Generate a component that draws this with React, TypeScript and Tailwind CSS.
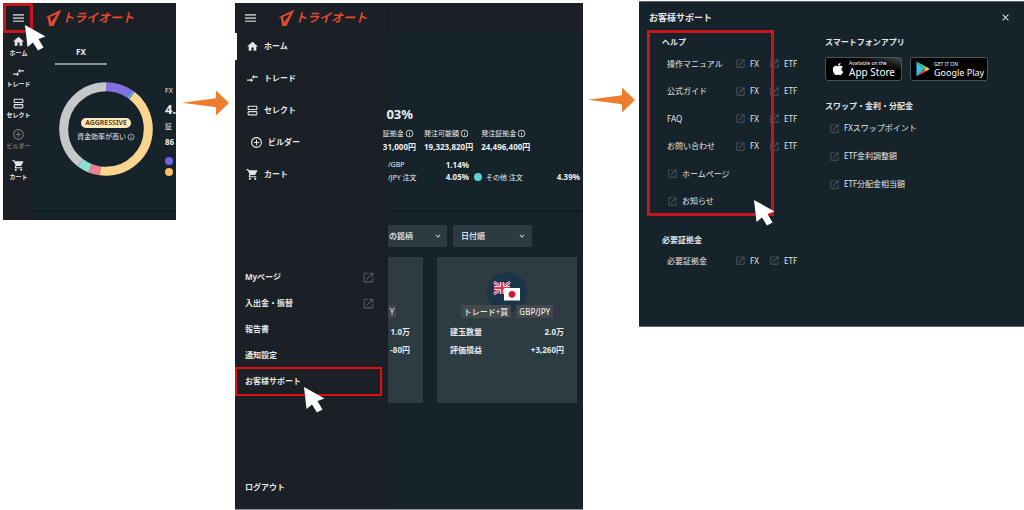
import React from "react";
import {
  MdAddCircleOutline,
  MdClose,
  MdCompareArrows,
  MdExpandMore,
  MdHome,
  MdInfoOutline,
  MdOpenInNew,
  MdOutlineViewAgenda,
  MdShoppingCart,
} from "react-icons/md";
import { FaApple } from "react-icons/fa";

const menu = [
  { label: "ホーム", Icon: MdHome },
  { label: "トレード", Icon: MdCompareArrows },
  { label: "セレクト", Icon: MdOutlineViewAgenda },
  { label: "ビルダー", Icon: MdAddCircleOutline },
  { label: "カート", Icon: MdShoppingCart },
];

function Bars() {
  return (
    <svg className="h-[10px] w-[11px]" viewBox="0 0 11 10" fill="currentColor" aria-hidden="true">
      <path d="M0 1h11v1.700H0z M0 4.200h11v1.700H0z M0 7.400h11v1.700H0z" />
    </svg>
  );
}

function Pointer({ className }: { className: string }) {
  return (
    <svg className={`absolute h-[26px] w-[21px] ${className}`} viewBox="0 0 21 26" fill="#fff" aria-hidden="true">
      <path d="M0 0 L2.5 22 L8 17.5 L13 25.5 L18.5 22.5 L13.5 14 L20.5 11.5 Z" />
    </svg>
  );
}

function Arrow({ className }: { className: string }) {
  return (
    <div className={`flex min-w-0 justify-center ${className}`}>
      <svg className="h-[26px] w-[47px]" viewBox="0 0 47 26" fill="#ed7d31" aria-hidden="true">
        <path d="M0 12.7 L34 8.3 V0.5 L47 13 L34 25.5 V17.2 Z" />
      </svg>
    </div>
  );
}

function Logo() {
  return (
    <a href="#" className="flex items-center text-[#e2492f]">
      <svg className="h-[18px] w-[17px]" viewBox="0 0 17 18" aria-hidden="true">
        <path
          d="M0.500 8.200 L16.500 0.500 L8.500 17 L4.200 17 L2.800 8.900 L5.200 8 L6.200 13.300 L12 5 L3.500 8.700 Z"
          fill="currentColor"
        />
      </svg>
      <span className="text-[12px] leading-none font-bold whitespace-nowrap italic">トライオート</span>
    </a>
  );
}

function Donut() {
  const parts = [
    { from: 0, to: 34, color: "#8470e0" },
    { from: 34, to: 38, color: "#5aa5f0" },
    { from: 38, to: 188, color: "#fbd48e" },
    { from: 188, to: 202, color: "#ec8094" },
    { from: 202, to: 217, color: "#8edfd2" },
    { from: 217, to: 360, color: "#c6c7c9" },
  ];
  return (
    <svg className="col-start-1 row-start-1 size-[94px]" viewBox="0 0 94 94" fill="none" aria-hidden="true">
      {parts.map((p) => (
        <circle
          key={p.from}
          cx="47"
          cy="47"
          r="42.3"
          stroke={p.color}
          strokeWidth="9"
          pathLength="360"
          strokeDasharray={`${p.to - p.from} ${360 - p.to + p.from}`}
          strokeDashoffset={-p.from}
          transform="rotate(-90 47 47)"
        />
      ))}
    </svg>
  );
}

function HomePanel() {
  return (
    <section className="relative mt-[3px] h-[217px] min-w-0 bg-[#16232b]">
      <div className="flex h-full flex-col overflow-hidden">
        <header className="flex h-[30px] shrink-0 items-center bg-[#1a2026]">
          <button aria-label="メニュー" className="flex w-[30px] justify-center text-[#a9adb1]">
            <Bars />
          </button>
          <div className="ml-[12px]">
            <Logo />
          </div>
        </header>
        <div className="flex min-h-0 grow">
          <nav className="w-[31px] shrink-0 bg-[#1a2026]">
            {menu.map(({ label, Icon }, i) => (
              <a
                key={label}
                href="#"
                className={`flex h-[31px] flex-col items-center gap-[2px] pt-[2px] ${i === 3 ? "text-[#6d7276]" : "text-[#e4e6e8]"}`}
              >
                <Icon className="size-[13px]" />
                <span className="text-[6px] leading-none font-bold whitespace-nowrap">{label}</span>
              </a>
            ))}
          </nav>
          <div className="flex min-w-0 grow flex-col overflow-hidden">
            <div className="ml-[21px] flex h-[32px] w-[52px] items-end justify-center border-b-2 border-[#8b969c] pb-[7px] text-[8px] leading-none font-bold">
              FX
            </div>
            <div className="mt-[17px] flex gap-[12px] pl-[25px]">
              <div className="grid shrink-0 place-items-center">
                <Donut />
                <div className="col-start-1 row-start-1 flex flex-col items-center gap-[5px]">
                  <span className="flex h-[10px] items-center rounded-full bg-[#fbe9b7] px-[4px] text-[7px] leading-none font-semibold text-[#4a3020]">
                    AGGRESSIVE
                  </span>
                  <span className="flex items-center gap-px text-[7px] leading-none whitespace-nowrap">
                    資金効率が高い
                    <MdInfoOutline className="size-[8px]" />
                  </span>
                </div>
              </div>
              <div className="flex shrink-0 flex-col whitespace-nowrap">
                <span className="flex h-[18px] items-center text-[7px]">FX</span>
                <span className="flex h-[18px] items-center text-[13px] leading-none font-bold">4.</span>
                <span className="flex h-[18px] items-center text-[7px]">証</span>
                <span className="flex h-[12px] items-center text-[8px] font-bold">86</span>
                <span className="mt-[9px] size-[8px] rounded-full bg-[#7460e8]" />
                <span className="mt-[3px] size-[8px] rounded-full bg-[#fbc05c]" />
              </div>
            </div>
            <div className="mt-[34px] h-[2px] shrink-0 bg-[#101a21]" />
          </div>
        </div>
      </div>
      <div className="absolute top-0 left-0 h-[30px] w-[30px] border-3 border-[#c8141c]" />
      <Pointer className="top-[22px] left-[22px]" />
    </section>
  );
}

function Stat({ label, value }: { label: string; value: string }) {
  return (
    <div className="flex flex-col whitespace-nowrap">
      <span className="flex h-[14px] items-center gap-px text-[7px]">
        {label}
        <MdInfoOutline className="size-[9px]" />
      </span>
      <span className="flex h-[14px] items-center text-[8px] font-bold">{value}</span>
    </div>
  );
}

function Drawer() {
  const links = [
    { label: "Myページ", external: true },
    { label: "入出金・振替", external: true },
    { label: "報告書", external: false },
    { label: "通知設定", external: false },
    { label: "お客様サポート", external: false },
  ];
  return (
    <aside className="relative flex w-[152px] shrink-0 flex-col bg-[#1a2026] text-[8px] leading-none font-bold text-[#e4e6e8]">
      <div className="flex h-[30px] items-center pl-[10px]">
        <button aria-label="メニューを閉じる" className="text-[#a9adb1]">
          <Bars />
        </button>
        <div className="ml-[22px]">
          <Logo />
        </div>
      </div>
      <nav className="-mt-[3px]">
        {menu.map(({ label, Icon }, i) => (
          <a key={label} href="#" className={`flex h-[32px] items-center gap-[5px] ${i === 3 ? "pl-[15px]" : "pl-[11px]"}`}>
            <Icon className="size-[13px]" />
            <span>{label}</span>
          </a>
        ))}
      </nav>
      <nav className="mt-[74px] pr-[12px] pl-[10px]">
        {links.map((l) => (
          <a key={l.label} href="#" className="flex h-[26px] items-center justify-between">
            <span>{l.label}</span>
            {l.external && <MdOpenInNew className="size-[13px] text-[#555b60]" />}
          </a>
        ))}
      </nav>
      <a href="#" className="mt-auto mb-[18px] pl-[10px]">
        ログアウト
      </a>
      <span className="absolute top-[30px] left-0 h-[27px] w-[2px] bg-white" />
      <span className="absolute top-[364px] left-0 h-[29px] w-[147px] border-2 border-[#e60d10]" />
      <Pointer className="top-[384px] left-[69px]" />
    </aside>
  );
}

function Flags() {
  return (
    <svg className="mx-auto size-[40px]" viewBox="0 0 40 40" aria-hidden="true">
      <circle cx="20" cy="20" r="20" fill="#1b3447" />
      <rect x="7" y="10" width="16" height="12" fill="#3a4a86" />
      <path d="M7 10 L23 22 M23 10 L7 22" stroke="#fff" strokeWidth="2.6" />
      <path d="M7 10 L23 22 M23 10 L7 22" stroke="#dc3550" strokeWidth="1.2" />
      <path d="M15 10 V22 M7 16 H23" stroke="#fff" strokeWidth="4" />
      <path d="M15 10 V22 M7 16 H23" stroke="#dc3550" strokeWidth="2.4" />
      <rect x="17" y="16" width="16" height="12.500" fill="#fff" />
      <circle cx="25" cy="22.300" r="3.400" fill="#d4152a" />
    </svg>
  );
}

function MenuPanel() {
  return (
    <section className="mt-[3px] flex h-[507px] min-w-0 overflow-hidden border-b border-[#8a9297] bg-[#16232b]">
      <Drawer />
      <div className="relative flex min-w-0 grow flex-col border-l border-[#141b21] leading-none">
        <div className="h-[30px] shrink-0 bg-[#1a2026]" />
        <div className="mt-[71px] flex h-[20px] w-[25px] items-center justify-end text-[13px] font-bold">03%</div>
        <div className="mt-[2px] flex gap-[8px]">
          <div className="flex w-[28px] shrink-0 justify-end">
            <Stat label="証拠金" value="31,000円" />
          </div>
          <Stat label="発注可能額" value="19,323,820円" />
          <Stat label="発注証拠金" value="24,496,400円" />
        </div>
        <div className="mt-[4px] grid grid-cols-[81px_1fr] gap-x-[5px] pr-[3px] text-[7px] whitespace-nowrap">
          <div className="flex h-[13px] items-center justify-between">
            <span>/GBP</span>
            <b className="text-[8px]">1.14%</b>
          </div>
          <div />
          <div className="flex h-[12px] items-center justify-between">
            <span>/JPY 注文</span>
            <b className="text-[8px]">4.05%</b>
          </div>
          <div className="flex h-[12px] items-center">
            <span className="mr-[4px] size-[8px] rounded-full bg-[#58d3cd]" />
            <span>その他 注文</span>
            <b className="ml-auto text-[8px]">4.39%</b>
          </div>
        </div>
        <div className="mt-[27px] h-[2px] bg-[#101a21]" />
        <div className="mt-[13px] flex gap-[6px] text-[8px] font-bold text-[#d5d9dc]">
          <div className="relative flex w-[59px] justify-end overflow-hidden">
            <select aria-label="銘柄" className="h-[22px] w-[74px] shrink-0 appearance-none bg-[#2c3a42] pl-[8px]">
              <option>ての銘柄</option>
            </select>
            <MdExpandMore className="pointer-events-none absolute top-[6px] right-[4px] size-[10px]" />
          </div>
          <div className="relative w-[79px]">
            <select aria-label="並び順" className="h-[22px] w-full appearance-none bg-[#2c3a42] pl-[8px]">
              <option>日付順</option>
            </select>
            <MdExpandMore className="pointer-events-none absolute top-[6px] right-[5px] size-[10px]" />
          </div>
        </div>
        <div className="mt-[10px] flex gap-[14px] pr-[6px] text-[8px] font-bold whitespace-nowrap text-[#e4e6e8]">
          <div className="h-[146px] w-[35px] shrink-0 bg-[#2d3b43] pt-[48px] pr-[13px] text-right">
            <div className="flex h-[13px] w-[8px] items-center justify-center bg-[#42484c] font-normal">Y</div>
            <div className="mt-[5px] flex h-[18px] items-center justify-end">1.0万</div>
            <div className="flex h-[18px] items-center justify-end">-80円</div>
          </div>
          <div className="h-[146px] grow bg-[#2d3b43] px-[13px] pt-[15px]">
            <Flags />
            <div className="-mt-[7px] flex justify-center gap-[5px] font-medium">
              <span className="flex h-[13px] items-center bg-[#42484c] px-[3px]">トレード+買</span>
              <span className="flex h-[13px] items-center bg-[#42484c] px-[3px]">GBP/JPY</span>
            </div>
            <div className="mt-[5px] flex h-[18px] items-center justify-between">
              <span>建玉数量</span>
              <span>2.0万</span>
            </div>
            <div className="flex h-[18px] items-center justify-between">
              <span>評価損益</span>
              <span>+3,260円</span>
            </div>
          </div>
        </div>
      </div>
    </section>
  );
}

function ExternalLink({ children }: { children: React.ReactNode }) {
  return (
    <a href="#" className="flex items-center gap-[4px] whitespace-nowrap">
      <MdOpenInNew className="size-[11px] text-[#4d575d]" />
      <span>{children}</span>
    </a>
  );
}

function ProductRow({ label }: { label: string }) {
  return (
    <div className="grid grid-cols-[68px_34px_1fr] items-center whitespace-nowrap">
      <span>{label}</span>
      <ExternalLink>FX</ExternalLink>
      <ExternalLink>ETF</ExternalLink>
    </div>
  );
}

function SupportPanel() {
  return (
    <section className="mt-px h-[326px] min-w-0 border-t border-b border-[#5c686f] bg-[#16232b] text-[8px] leading-none text-[#e4e6e8]">
      <div className="flex h-[30px] items-center justify-between pr-[13px] pl-[10px]">
        <h2 className="text-[9px] font-bold">お客様サポート</h2>
        <button aria-label="閉じる">
          <MdClose className="size-[11px]" />
        </button>
      </div>
      <div className="grid grid-cols-[178px_1fr] pl-[8px]">
        <div>
          <div className="relative h-[184px] pl-[20px]">
            <h3 className="-ml-[5px] flex h-[18px] items-end pb-[4px] font-bold">ヘルプ</h3>
            <div className="grid h-[165px] grid-rows-6">
              <ProductRow label="操作マニュアル" />
              <ProductRow label="公式ガイド" />
              <ProductRow label="FAQ" />
              <ProductRow label="お問い合わせ" />
              <ExternalLink>ホームページ</ExternalLink>
              <ExternalLink>お知らせ</ExternalLink>
            </div>
            <div className="pointer-events-none absolute -top-[2px] left-0 h-[186px] w-[127px] border-3 border-[#c8141c]" />
            <Pointer className="top-[168px] left-[107px]" />
          </div>
          <div className="pt-[20px] pl-[20px]">
            <h3 className="-ml-[5px] font-bold">必要証拠金</h3>
            <div className="mt-[11px]">
              <ProductRow label="必要証拠金" />
            </div>
          </div>
        </div>
        <div>
          <h3 className="flex h-[18px] items-end pb-[4px] font-bold">スマートフォンアプリ</h3>
          <div className="mt-[7px] flex gap-[8px] text-white">
            <a
              href="#"
              className="flex h-[24px] w-[77px] items-center gap-[4px] rounded-[3px] border border-[#4c5357] bg-linear-to-tr from-black from-60% to-[#4a4d50] pl-[5px]"
            >
              <FaApple className="size-[14px]" />
              <span className="flex flex-col gap-px whitespace-nowrap">
                <span className="text-[5px] leading-none">Available on the</span>
                <span className="text-[10px] leading-none">App Store</span>
              </span>
            </a>
            <a href="#" className="flex h-[24px] w-[78px] items-center gap-[4px] rounded-[3px] border border-[#4c5357] bg-black pl-[5px]">
              <svg className="h-[16px] w-[14px] shrink-0" viewBox="0 0 14 16" aria-hidden="true">
                <path d="M0.500 0.500 V15.500 L8 8 Z" fill="#2fc4e8" />
                <path d="M0.500 0.500 L8 8 L10.300 5.700 Z" fill="#46d089" />
                <path d="M0.500 15.500 L8 8 L10.300 10.300 Z" fill="#ea4a4f" />
                <path d="M10.300 5.700 L13.700 8 L10.300 10.300 L8 8 Z" fill="#f9c440" />
              </svg>
              <span className="flex flex-col gap-px whitespace-nowrap">
                <span className="text-[5px] leading-none">GET IT ON</span>
                <span className="text-[9px] leading-none">Google Play</span>
              </span>
            </a>
          </div>
          <h3 className="mt-[21px] font-bold">スワップ・金利・分配金</h3>
          <div className="mt-[4px] grid auto-rows-[28px] pl-[4px]">
            <ExternalLink>FXスワップポイント</ExternalLink>
            <ExternalLink>ETF金利調整額</ExternalLink>
            <ExternalLink>ETF分配金相当額</ExternalLink>
          </div>
        </div>
      </div>
    </section>
  );
}

export default function App() {
  return (
    <main className="grid grid-cols-[173fr_59fr_348fr_56fr_385fr] items-start bg-white pl-[3px] font-['Noto_Sans','Noto_Sans_CJK_JP',sans-serif] text-[#eceef0]">
      <HomePanel />
      <Arrow className="pt-[90px]" />
      <MenuPanel />
      <Arrow className="pt-[87px]" />
      <SupportPanel />
    </main>
  );
}
